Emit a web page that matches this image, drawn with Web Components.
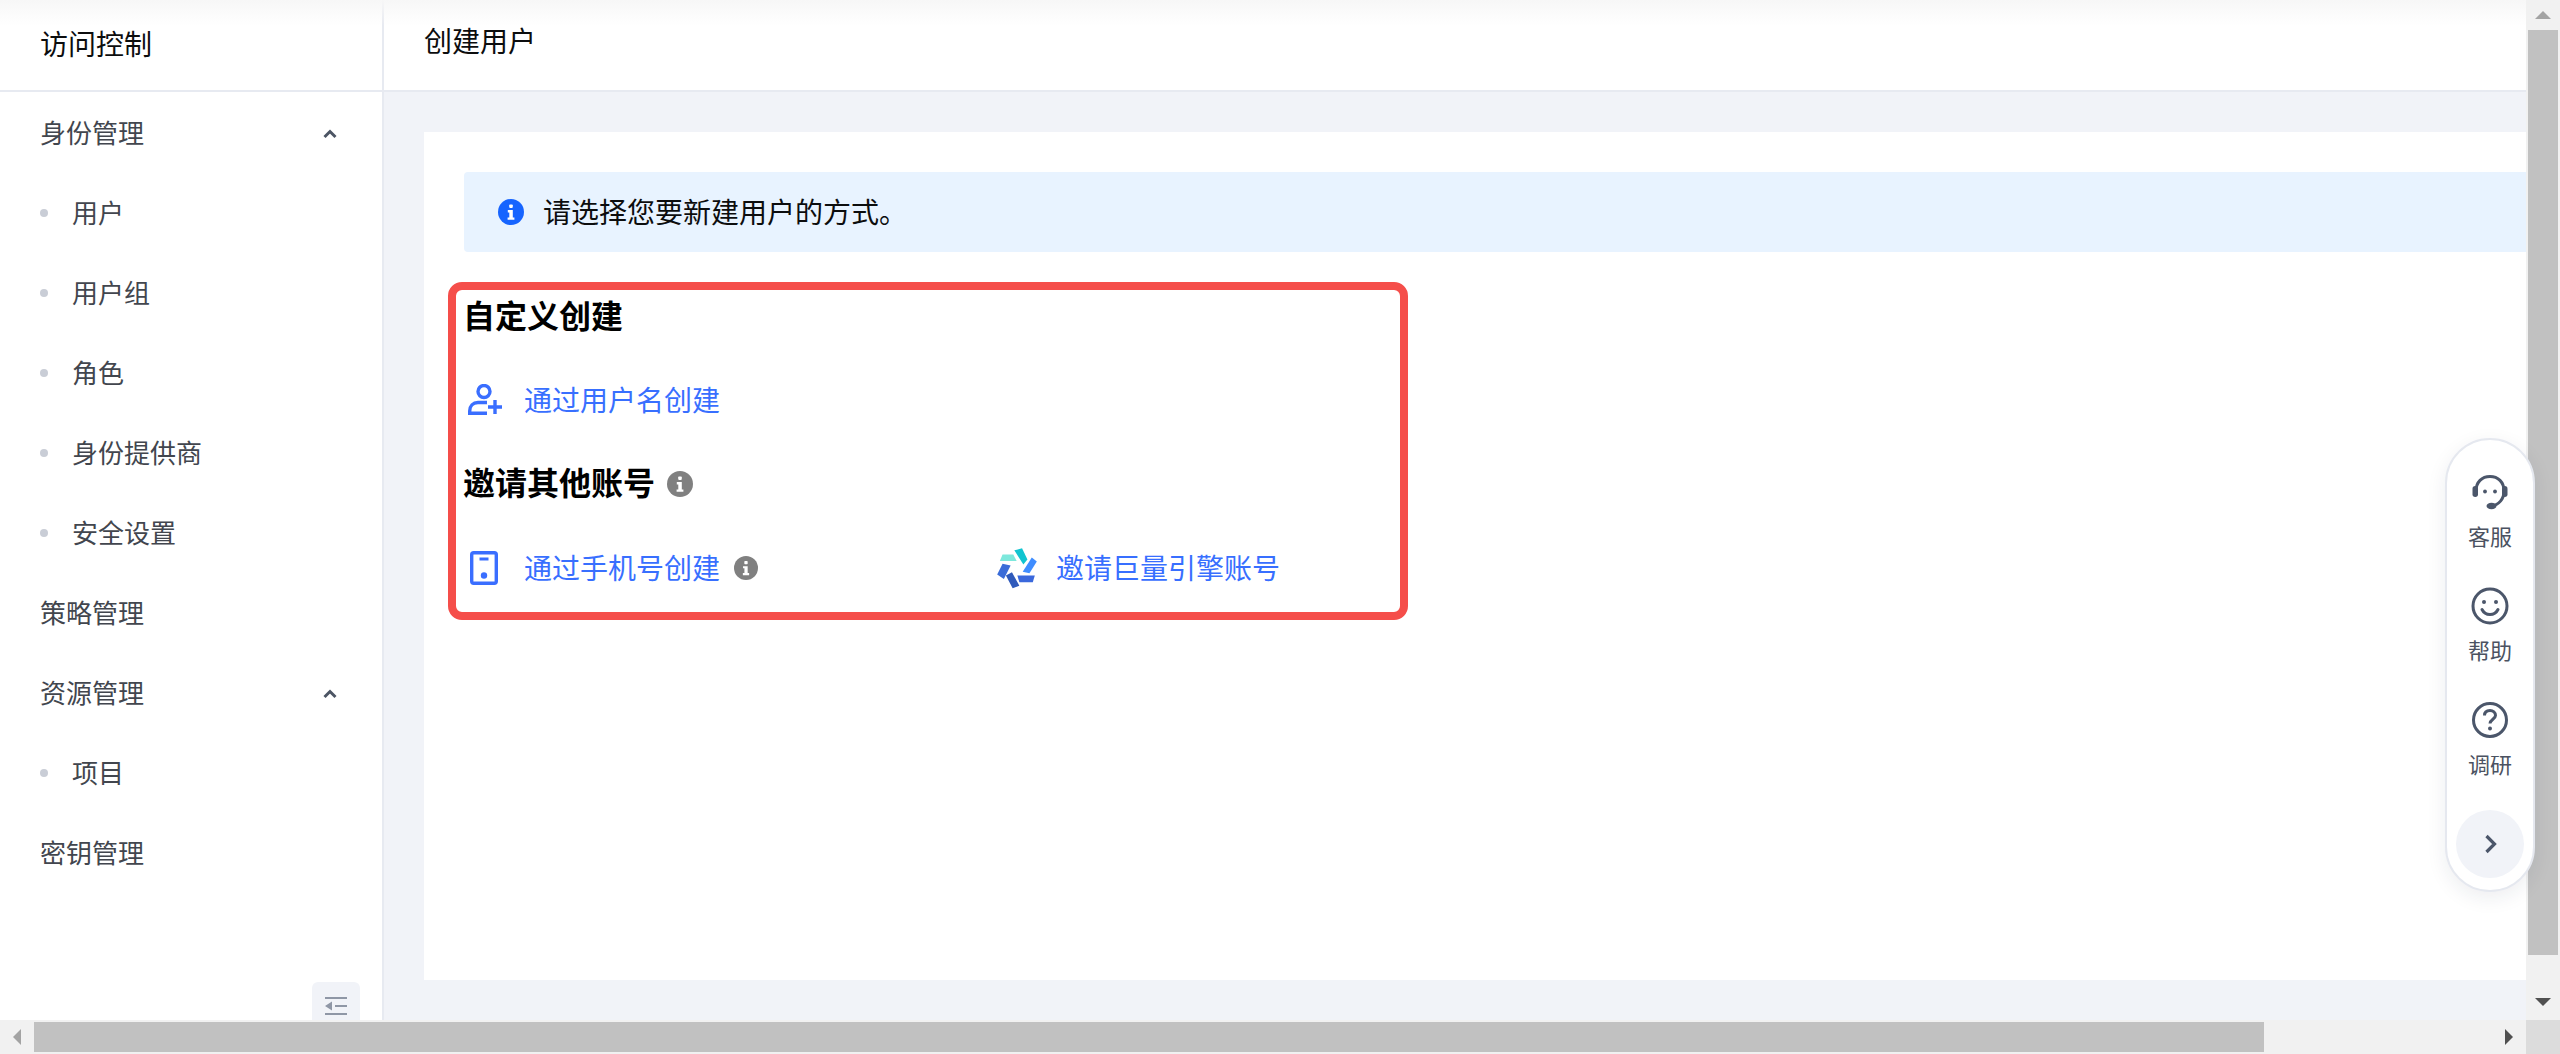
<!DOCTYPE html>
<html lang="zh-CN">
<head>
<meta charset="utf-8">
<title>创建用户</title>
<style>
html, body { margin: 0; height: 100%; overflow: hidden; background: #fff; }
body { font-family: "Noto Sans CJK SC", "Noto Sans", sans-serif; }
</style>
</head>
<body>
<console-app>
  <side-nav slot="side">
    <nav-item kind="group" open>身份管理</nav-item>
    <nav-item kind="sub">用户</nav-item>
    <nav-item kind="sub">用户组</nav-item>
    <nav-item kind="sub">角色</nav-item>
    <nav-item kind="sub">身份提供商</nav-item>
    <nav-item kind="sub">安全设置</nav-item>
    <nav-item kind="group">策略管理</nav-item>
    <nav-item kind="group" open>资源管理</nav-item>
    <nav-item kind="sub">项目</nav-item>
    <nav-item kind="group">密钥管理</nav-item>
  </side-nav>
  <create-panel slot="main"></create-panel>
  <float-tools slot="tools"></float-tools>
</console-app>

<script>
const infoDot = (size, fill) => `<svg width="${size}" height="${size}" viewBox="0 0 26 26" style="display:block;flex:none">
  <circle cx="13" cy="13" r="13" fill="${fill}"/>
  <rect x="11.2" y="5.5" width="3.6" height="3.4" rx=".8" fill="#fff"/>
  <path d="M9.8 11h5v7.4h1.6v2.4H9.6v-2.4h1.7v-5H9.8z" fill="#fff"/>
</svg>`;

class ConsoleApp extends HTMLElement {
  constructor() {
    super();
    this.attachShadow({ mode: 'open' }).innerHTML = `
<style>
:host { display: grid; grid-template-columns: 1fr 34px; grid-template-rows: 1fr 34px; width: 100vw; height: 100vh; position: relative; overflow: hidden; }
.body { display: grid; grid-template-columns: 384px 1fr; min-width: 0; min-height: 0; overflow: hidden; }
.side { border-right: 2px solid #e7eaf1; min-height: 0; }
.right { display: flex; flex-direction: column; min-width: 0; min-height: 0; }
.top { flex: none; height: 90px; border-bottom: 2px solid #e7eaf1; display: flex; align-items: center; padding-left: 40px; font-size: 28px; color: #0c0d0e; }
.top span { padding-bottom: 10px; }
.corner { background: #dcdcdc; }
.fade { position: absolute; left: 0; right: 34px; top: 0; height: 26px; background: linear-gradient(#f7f7f7, rgba(255,255,255,0)); pointer-events: none; }
</style>
<div class="body">
  <div class="side"><slot name="side"></slot></div>
  <div class="right">
    <div class="top"><span>创建用户</span></div>
    <slot name="main"></slot>
  </div>
</div>
<win-scrollbar orient="v"></win-scrollbar>
<win-scrollbar orient="h"></win-scrollbar>
<div class="corner"></div>
<div class="fade"></div>
<slot name="tools"></slot>`;
  }
}

class SideNav extends HTMLElement {
  constructor() {
    super();
    this.attachShadow({ mode: 'open' }).innerHTML = `
<style>
:host { display: flex; flex-direction: column; height: 100%; position: relative; box-sizing: border-box; }
.head { flex: none; height: 90px; border-bottom: 2px solid #e7eaf1; display: flex; align-items: center; padding-left: 40px; font-size: 28px; color: #0c0d0e; }
.head span { padding-bottom: 4px; }
.list { flex: 1; padding-top: 1px; }
.fold { position: absolute; left: 312px; bottom: 0; width: 48px; height: 38px; background: #f1f3f8; border-radius: 6px 6px 0 0; display: flex; justify-content: center; padding-top: 14px; box-sizing: border-box; }
</style>
<div class="head"><span>访问控制</span></div>
<div class="list"><slot></slot></div>
<div class="fold">
  <svg width="22" height="20" viewBox="0 0 22 20" style="display:block"><path d="M0 1h22v2H0zM10 9h12v2H10zM0 17h22v2H0zM0 10l7-4.500v9z" fill="#8f97a6"/></svg>
</div>`;
  }
}

class NavItem extends HTMLElement {
  constructor() {
    super();
    this.attachShadow({ mode: 'open' }).innerHTML = `
<style>
:host { display: flex; align-items: center; height: 80px; padding-left: 40px; font-size: 26px; color: #42464e; position: relative; }
.dot { display: none; width: 8px; height: 8px; border-radius: 50%; background: #c9cdd6; margin-right: 24px; }
:host([kind="sub"]) .dot { display: block; }
.t { padding-bottom: 4px; }
svg { display: none; position: absolute; left: 323px; top: 36px; }
:host([open]) svg { display: block; }
</style>
<span class="dot"></span><span class="t"><slot></slot></span>
<svg width="14" height="10" viewBox="0 0 14 10"><path d="M1.500 8 7 2.500 12.500 8" fill="none" stroke="#4c5564" stroke-width="3"/></svg>`;
  }
}

class CreatePanel extends HTMLElement {
  constructor() {
    super();
    const phone = `<svg width="28" height="34" viewBox="0 0 28 34" style="display:block"><rect x="1.700" y="1.700" width="24.600" height="30.600" rx="2" fill="none" stroke="#3a6eff" stroke-width="3.400"/><path d="M9.500 8h9" stroke="#3a6eff" stroke-width="3"/><circle cx="14" cy="24.500" r="3.200" fill="#3a6eff"/></svg>`;
    const user = `<svg width="34" height="32" viewBox="0 0 34 32" style="display:block"><circle cx="16" cy="7.500" r="6" fill="none" stroke="#3a6eff" stroke-width="3.400"/><path d="M1.700 31V27C1.700 22 5 18.500 10 18.500h9M1 29.300h18" fill="none" stroke="#3a6eff" stroke-width="3.400"/><path d="M27 16v14M20 23h14" stroke="#3a6eff" stroke-width="3.400"/></svg>`;
    const logo = `<svg width="40" height="41" viewBox="52 38 118 122" style="display:block">
      <polygon points="68,57 100,57 110,77 60,77" fill="#7de8dc"/>
      <polygon points="103,45 126,39 142,72 130,87" fill="#10c4d0"/>
      <polygon points="155,66 170,78 148,113 128,109" fill="#3f8dff"/>
      <polygon points="112,120 164,120 158,140 118,140" fill="#3a68dc"/>
      <polygon points="78,120 96,110 118,150 98,158" fill="#2f5abb"/>
      <polygon points="68,85 92,90 72,130 52,117" fill="#3a6cd8"/>
    </svg>`;
    this.attachShadow({ mode: 'open' }).innerHTML = `
<style>
:host { display: flex; flex: 1; min-height: 0; background: #f1f3f8; padding: 40px 0 40px 40px; }
.card { flex: 1; background: #fff; padding-top: 40px; min-width: 0; }
.alert { height: 80px; margin-left: 40px; background: #e8f3ff; border-radius: 4px 0 0 4px; display: flex; align-items: center; gap: 17px; padding-left: 37px; font-size: 28px; color: #0c0d0e; }
.alert svg { margin-left: -3px; }
.alert span { padding-bottom: 3px; margin-left: 2px; }
.box { width: 960px; height: 338px; box-sizing: border-box; margin: 30px 0 0 24px; border: 8px solid #f54e4a; border-radius: 14px; padding-left: 8px; }
h3 { margin: 0; height: 54px; box-sizing: border-box; display: flex; align-items: center; gap: 12px; font-size: 32px; font-weight: 700; color: #000; }
h3 span { padding-bottom: 6px; margin-left: -1px; }
.second { margin-top: 29px; }
.row { display: flex; height: 56px; margin-top: 28px; }
.second + .row { margin-top: 29px; }
</style>
<div class="card">
  <div class="alert">${infoDot(26, '#1664ff')}<span>请选择您要新建用户的方式。</span></div>
  <div class="box">
    <h3><span>自定义创建</span></h3>
    <div class="row"><create-link>${user}<span slot="label">通过用户名创建</span></create-link></div>
    <h3 class="second"><span>邀请其他账号</span>${infoDot(26, '#808080')}</h3>
    <div class="row">
      <create-link style="width:532px" icon="phone">${phone}<span slot="label">通过手机号创建</span><span slot="after">${infoDot(24, '#808080')}</span></create-link>
      <create-link icon="logo">${logo}<span slot="label">邀请巨量引擎账号</span></create-link>
    </div>
  </div>
</div>`;
  }
}

class CreateLink extends HTMLElement {
  constructor() {
    super();
    this.attachShadow({ mode: 'open' }).innerHTML = `
<style>
:host { display: flex; align-items: center; font-size: 28px; color: #386fff; }
.ico { width: 60px; display: flex; padding-left: 4px; box-sizing: border-box; flex: none; }
:host([icon="phone"]) .ico { padding-left: 6px; }
:host([icon="logo"]) .ico { padding-left: 1px; }
.after { margin-left: 14px; display: flex; }
::slotted([slot="label"]) { padding-bottom: 3px; }
</style>
<span class="ico"><slot></slot></span>
<slot name="label"></slot>
<span class="after"><slot name="after"></slot></span>`;
  }
}

class FloatTools extends HTMLElement {
  constructor() {
    super();
    const c = '#4b566a';
    this.attachShadow({ mode: 'open' }).innerHTML = `
<style>
:host { position: absolute; left: 2445px; top: 438px; width: 90px; height: 454px; box-sizing: border-box; background: #fff; border: 2px solid #e5e8ef; border-radius: 45px; box-shadow: 0 6px 20px rgba(30,40,70,.08); display: flex; flex-direction: column; align-items: center; padding-top: 32px; }
.next { width: 68px; height: 68px; border-radius: 50%; background: #f1f3f8; display: flex; align-items: center; justify-content: center; margin-top: 30px; }
</style>
<tool-btn label="客服"><svg width="40" height="40" viewBox="0 0 40 40">
  <path d="M6 19C6 10 12 4.500 20 4.500S34 10 34 19C34 27 29 33 21 34" fill="none" stroke="${c}" stroke-width="3"/>
  <rect x="2.500" y="14" width="5.500" height="11" rx="2.700" fill="${c}"/><rect x="32" y="14" width="5.500" height="11" rx="2.700" fill="${c}"/>
  <ellipse cx="21.500" cy="34" rx="5" ry="3.200" fill="${c}"/>
  <circle cx="15" cy="19.500" r="1.900" fill="${c}"/><circle cx="25" cy="19.500" r="1.900" fill="${c}"/>
</svg></tool-btn>
<tool-btn label="帮助"><svg width="40" height="40" viewBox="0 0 40 40">
  <circle cx="20" cy="20" r="17" fill="none" stroke="${c}" stroke-width="3"/>
  <circle cx="14" cy="16" r="2" fill="${c}"/><circle cx="26" cy="16" r="2" fill="${c}"/>
  <path d="M12 23.500C14 27.500 17 28.500 20 28.500S26 27.500 28 23.500" fill="none" stroke="${c}" stroke-width="3" stroke-linecap="round"/>
</svg></tool-btn>
<tool-btn label="调研"><svg width="40" height="40" viewBox="0 0 40 40">
  <circle cx="20" cy="20" r="16.500" fill="none" stroke="${c}" stroke-width="3"/>
  <path d="M14.500 15.500C14.500 12 17 10.500 20 10.500S25.500 12.500 25.500 15.500C25.500 19 20 19.500 20 23.500" fill="none" stroke="${c}" stroke-width="3"/>
  <circle cx="20" cy="28.500" r="2" fill="${c}"/>
</svg></tool-btn>
<div class="next"><svg width="13" height="20" viewBox="0 0 13 20"><path d="M2.500 2l8 8-8 8" fill="none" stroke="${c}" stroke-width="3.200"/></svg></div>`;
  }
}

class ToolBtn extends HTMLElement {
  constructor() {
    super();
    this.attachShadow({ mode: 'open' }).innerHTML = `
<style>
:host { display: flex; flex-direction: column; align-items: center; height: 80px; margin-bottom: 34px; }
:host(:nth-of-type(3)) { margin-bottom: 0; }
::slotted(svg) { display: block; }
.t { font-size: 22px; line-height: 30px; margin-top: 8px; color: #4b5261; }
</style>
<slot></slot><span class="t">${this.getAttribute('label') || ''}</span>`;
  }
}

class WinScrollbar extends HTMLElement {
  constructor() {
    super();
    this.attachShadow({ mode: 'open' });
  }
  connectedCallback() {
    const v = this.getAttribute('orient') === 'v';
    this.shadowRoot.innerHTML = v ? `
<style>
:host { display: flex; flex-direction: column; background: #f1f1f1; padding: 0 2px; }
.btn { height: 30px; flex: none; display: flex; align-items: center; justify-content: center; }
.thumb { height: 925px; background: #c1c1c1; flex: none; }
.sp { flex: 1; }
</style>
<div class="btn"><svg width="16" height="8" viewBox="0 0 16 8"><path d="M8 0l8 8H0z" fill="#a3a3a3"/></svg></div>
<div class="thumb"></div><div class="sp"></div>
<div class="btn" style="height:36px"><svg width="16" height="8" viewBox="0 0 16 8"><path d="M0 0h16L8 8z" fill="#505050"/></svg></div>` : `
<style>
:host { display: flex; background: #f1f1f1; padding: 2px 0; }
.btn { width: 34px; flex: none; display: flex; align-items: center; justify-content: center; }
.thumb { width: 2230px; background: #c1c1c1; flex: none; }
.sp { flex: 1; }
</style>
<div class="btn"><svg width="8" height="16" viewBox="0 0 8 16"><path d="M8 0v16L0 8z" fill="#a3a3a3"/></svg></div>
<div class="thumb"></div><div class="sp"></div>
<div class="btn"><svg width="8" height="16" viewBox="0 0 8 16"><path d="M0 0l8 8-8 8z" fill="#505050"/></svg></div>`;
  }
}

customElements.define('win-scrollbar', WinScrollbar);
customElements.define('nav-item', NavItem);
customElements.define('side-nav', SideNav);
customElements.define('create-link', CreateLink);
customElements.define('create-panel', CreatePanel);
customElements.define('tool-btn', ToolBtn);
customElements.define('float-tools', FloatTools);
customElements.define('console-app', ConsoleApp);
</script>
</body>
</html>
